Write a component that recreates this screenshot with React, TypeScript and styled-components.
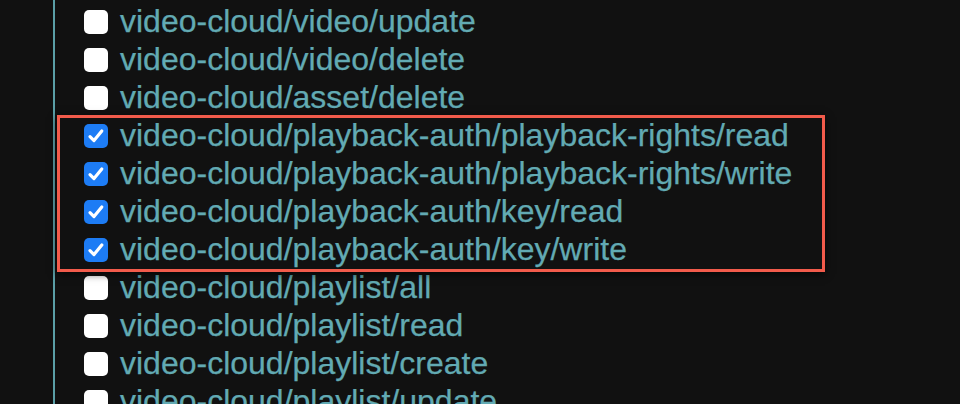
import React from "react";
import styled, { createGlobalStyle } from "styled-components";

const Global = createGlobalStyle`
  html, body {
    margin: 0;
    padding: 0;
    background: #111111;
    height: 404px;
    overflow: hidden;
  }
  #root { height: 100%; }
`;

const Page = styled.div`
  height: 404px;
  padding-left: 53px;
  box-sizing: border-box;
  background: #111111;
`;

const List = styled.ul`
  list-style: none;
  margin: 0;
  padding: 3px 0 0 29px;
  height: 100%;
  box-sizing: border-box;
  border-left: 2px solid #5b9fa7;
  font-family: "Liberation Sans", Arial, Helvetica, sans-serif;
  font-size: 32px;
  color: #62aab3;
  -webkit-text-stroke: 0.25px #62aab3;
`;

const Highlight = styled.li`
  position: relative;
  list-style: none;
  &::after {
    content: "";
    position: absolute;
    left: -27px;
    top: -2px;
    width: 768px;
    bottom: -3px;
    box-sizing: border-box;
    border: 3px solid #f25b4b;
    box-shadow: 0 2px 8px rgba(0, 0, 0, 0.7);
    pointer-events: none;
  }
`;

const Group = styled.ul`
  list-style: none;
  margin: 0;
  padding: 0;
`;

const Row = styled.li`
  display: flex;
  align-items: center;
  height: 38px;
  gap: 12px;
  white-space: nowrap;
`;

const Box = styled.span<{ $checked: boolean }>`
  flex: none;
  width: 24px;
  height: 24px;
  border-radius: 5px;
  box-sizing: border-box;
  display: flex;
  align-items: center;
  justify-content: center;
  background: ${(p) => (p.$checked ? "#1d7cf5" : "#ffffff")};
`;

const Label = styled.span`
  line-height: 38px;
  margin-top: -2px;
`;

const Check = () => (
  <svg width="24" height="24" viewBox="0 0 24 24" aria-hidden="true">
    <path
      d="M6 12.6 L10 16.6 L17.8 7"
      fill="none"
      stroke="#ffffff"
      strokeWidth="3.2"
      strokeLinecap="round"
      strokeLinejoin="round"
    />
  </svg>
);

const Item = ({ label, checked = false }: { label: string; checked?: boolean }) => (
  <Row role="checkbox" aria-checked={checked}>
    <Box $checked={checked}>{checked && <Check />}</Box>
    <Label>{label}</Label>
  </Row>
);

const before = [
  "video-cloud/video/update",
  "video-cloud/video/delete",
  "video-cloud/asset/delete",
];
const highlighted = [
  "video-cloud/playback-auth/playback-rights/read",
  "video-cloud/playback-auth/playback-rights/write",
  "video-cloud/playback-auth/key/read",
  "video-cloud/playback-auth/key/write",
];
const after = [
  "video-cloud/playlist/all",
  "video-cloud/playlist/read",
  "video-cloud/playlist/create",
  "video-cloud/playlist/update",
];

export default function App() {
  return (
    <>
      <Global />
      <Page>
        <List>
          {before.map((l) => (
            <Item key={l} label={l} />
          ))}
          <Highlight>
            <Group>
              {highlighted.map((l) => (
                <Item key={l} label={l} checked />
              ))}
            </Group>
          </Highlight>
          {after.map((l) => (
            <Item key={l} label={l} />
          ))}
        </List>
      </Page>
    </>
  );
}
